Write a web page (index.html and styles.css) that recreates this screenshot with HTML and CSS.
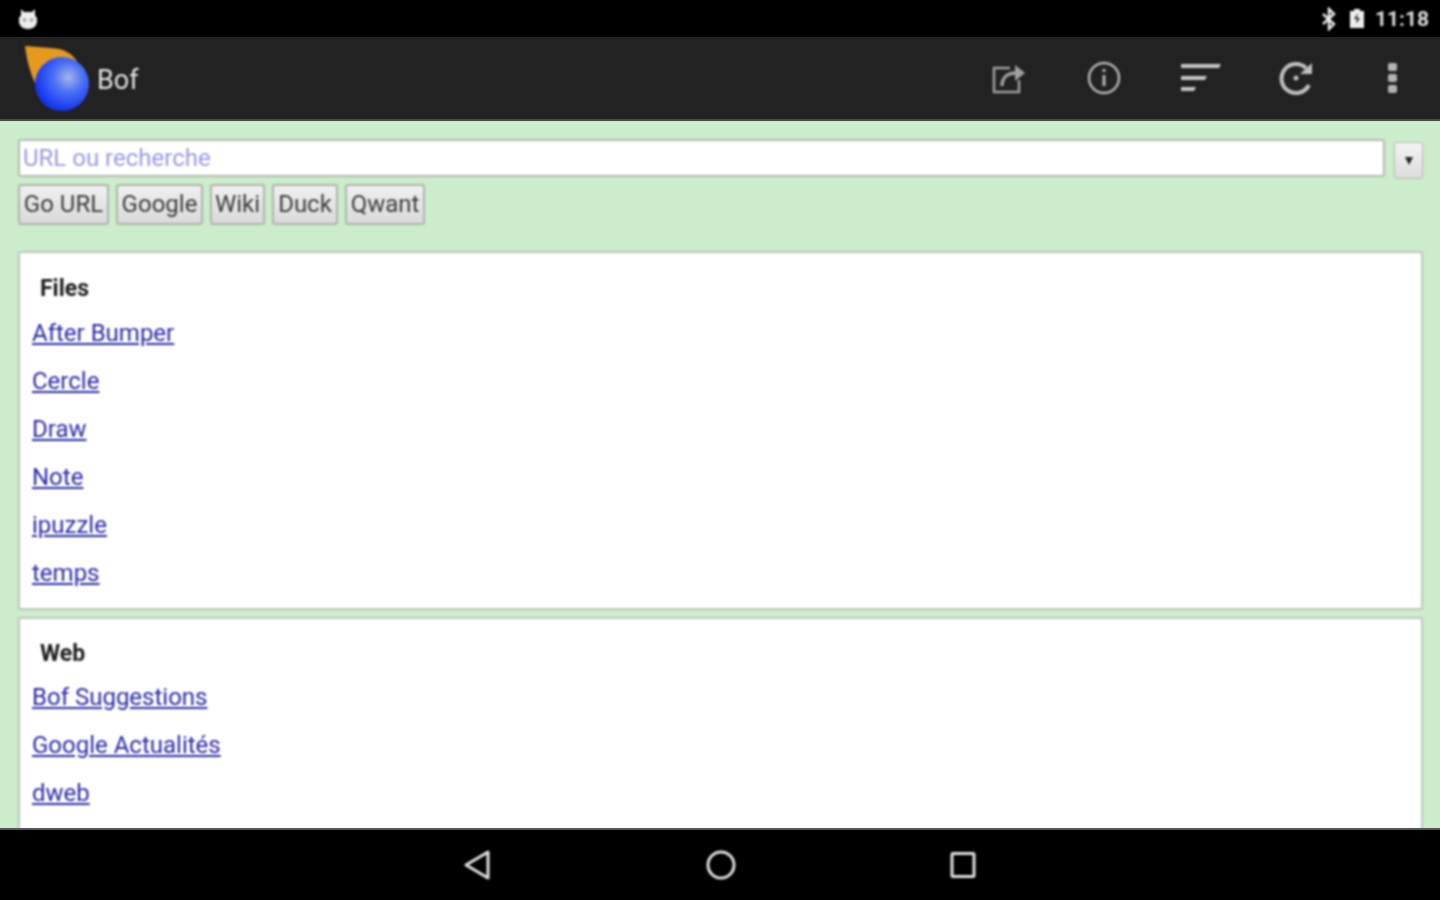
FILE: index.html
```
<!DOCTYPE html>
<html lang="fr">
<head>
<meta charset="utf-8">
<title>Bof</title>
<link rel="stylesheet" href="styles.css">
</head>
<body>
<div class="screen">
  <header class="status">
    <svg class="cat" width="24" height="24" viewBox="0 0 24 24"><path d="M5 2l3 3h8l3-3v7c2 0 2 3 2 5 0 5-4 8-9 8s-9-3-9-8c0-2 0-5 2-5z" fill="#eee"/><circle cx="8.500" cy="13" r="2" fill="#aaa"/><circle cx="15.500" cy="13" r="2" fill="#aaa"/></svg>
    <div class="status-right">
      <svg class="bt" width="16" height="24" viewBox="0 0 16 24"><path d="M2 7l11 10-5 5V2l5 5L2 17" fill="none" stroke="#eee" stroke-width="2.400"/></svg>
      <svg width="16" height="19" viewBox="0 0 16 19"><path d="M1 2h4V0h6v2h4v17H1z" fill="#eee"/><path d="M9 4l-4 6h3l-1 5 4-6H8z" fill="#222"/></svg>
      <span class="clock">11:18</span>
    </div>
  </header>
  <div class="actionbar">
    <svg class="logo" width="68" height="72" viewBox="0 0 68 72">
      <defs><radialGradient id="ball" cx="0.62" cy="0.38" r="0.62"><stop offset="0" stop-color="#a4b6e8"/><stop offset="0.45" stop-color="#4a70f5"/><stop offset="1" stop-color="#1435f0"/></radialGradient></defs>
      <path d="M1 7l26 2c14 1 21 5 27 15L16 54C8 40 3 24 1 7z" fill="#e59a1f"/>
      <circle cx="38" cy="45" r="27" fill="url(#ball)"/>
    </svg>
    <span class="title">Bof</span>
    <nav class="actions">
      <button class="act" type="button" aria-label="Partager"><svg width="36" height="36" viewBox="0 0 36 36" fill="none" stroke="#a0a0a0" stroke-width="2.500"><path d="M19 8H3v24h25V20"/><path d="M11 26c0-8 5-13 14-13" stroke-width="3.500"/><path d="M24 5l10 8-10 8z" fill="#a0a0a0" stroke="none"/></svg></button>
      <button class="act" type="button" aria-label="Infos"><svg width="36" height="36" viewBox="0 0 36 36" fill="none" stroke="#b4b4b4" stroke-width="2.500"><circle cx="17" cy="18" r="15"/><path d="M17 15v11M17 9v3" stroke-width="3"/></svg></button>
      <button class="act" type="button" aria-label="Trier"><svg width="44" height="30" viewBox="0 0 44 30" fill="#c8c8c8"><path d="M2 1h40l-2 4H2zM2 13h26l-2 4H2zM2 24h15l-2 4H2z"/></svg></button>
      <button class="act" type="button" aria-label="Recharger"><svg width="36" height="36" viewBox="0 0 36 36" fill="none" stroke="#c0c0c0" stroke-width="4"><path d="M30 25A14.500 14.500 0 1 1 27 8"/><path d="M21 14h12V3z" fill="#c0c0c0" stroke="none"/><circle cx="17" cy="18" r="2.500" fill="#c0c0c0" stroke="none"/></svg></button>
      <button class="act" type="button" aria-label="Menu"><svg width="12" height="34" viewBox="0 0 12 34" fill="#b4b4b4"><rect x="1" y="2" width="9" height="8" rx="2"/><rect x="1" y="13" width="9" height="8" rx="2"/><rect x="1" y="24" width="9" height="8" rx="2"/></svg></button>
    </nav>
  </div>
  <main class="content">
    <div class="urlrow">
      <div class="urlinput">URL ou recherche</div>
      <button class="drop" type="button"><span class="tri"></span></button>
    </div>
    <div class="btnrow">
      <button class="btn b1" type="button">Go URL</button>
      <button class="btn b2" type="button">Google</button>
      <button class="btn b3" type="button">Wiki</button>
      <button class="btn b4" type="button">Duck</button>
      <button class="btn b5" type="button">Qwant</button>
    </div>
    <section class="card">
      <h2 class="head">Files</h2>
      <a class="lnk" href="#">After Bumper</a>
      <a class="lnk" href="#">Cercle</a>
      <a class="lnk" href="#">Draw</a>
      <a class="lnk" href="#">Note</a>
      <a class="lnk" href="#">ipuzzle</a>
      <a class="lnk" href="#">temps</a>
    </section>
    <section class="card">
      <h2 class="head">Web</h2>
      <a class="lnk" href="#">Bof Suggestions</a>
      <a class="lnk" href="#">Google Actualités</a>
      <a class="lnk" href="#">dweb</a>
    </section>
  </main>
  <footer class="navbar">
    <svg width="30" height="32" viewBox="0 0 30 32" fill="none" stroke="#e0e0e0" stroke-width="3" stroke-linejoin="round"><path d="M25 3v26L3 16z"/></svg>
    <svg width="32" height="32" viewBox="0 0 32 32" fill="none" stroke="#e0e0e0" stroke-width="3"><circle cx="16" cy="16" r="13"/></svg>
    <svg width="28" height="30" viewBox="0 0 28 30" fill="none" stroke="#e0e0e0" stroke-width="3" stroke-linejoin="round"><rect x="3" y="3.500" width="22" height="23" rx="1"/></svg>
  </footer>
</div>
</body>
</html>
```
FILE: styles.css
```
* { box-sizing: border-box; }
html, body { margin: 0; height: 100%; background: #000; overflow: hidden; }
body { font-family: Roboto, "Liberation Sans", sans-serif; }
.screen { width: 1440px; height: 900px; display: flex; flex-direction: column; overflow: hidden; }

/* the reference is a soft upscaled capture */
.status > *, .actionbar > *, .urlrow, .btnrow, .card, .navbar svg { filter: blur(0.85px); }

.status { height: 37px; flex: none; background: #000; display: flex; align-items: center; justify-content: space-between; padding: 0 11px 0 16px; }
.status-right { display: flex; align-items: center; gap: 10px; }
.clock { color: #ddd; font-size: 21px; font-weight: 700; }
.status-right svg { flex: none; }
.bt { margin-right: 2px; }

.actionbar { height: 84px; flex: none; background: #222; border-bottom: 2px solid #444c44; display: flex; align-items: center; position: relative; padding-left: 24px; }
.logo { flex: none; margin-top: -6px; }
.title { color: #e4e4e4; font-size: 27px; margin-left: 5px; margin-top: 4px; }
.actions { margin-left: auto; margin-right: -1px; display: flex; align-items: center; }
.act { width: 96px; height: 60px; padding: 0; background: none; border: 0; display: flex; align-items: center; justify-content: center; }

.content { flex: 1; min-height: 0; overflow: hidden; background: #cdeccb; padding: 18px 17px 0 18px; }
.urlrow { display: flex; align-items: flex-start; gap: 9px; }
.urlinput { flex: 1; height: 38px; background: #fff; border: 2px solid #b3bab2; border-radius: 3px; color: #9a98e4; font-size: 24px; line-height: 34px; padding-left: 3px; }
.drop { width: 29px; height: 37px; margin-top: 3px; padding: 0; background: linear-gradient(#f4f4f4, #dcdcdc); border: 1px solid #b3bab2; border-radius: 3px; display: flex; align-items: center; justify-content: center; }
.tri { width: 0; height: 0; border-left: 4.500px solid transparent; border-right: 4.500px solid transparent; border-top: 8px solid #222; }

.btnrow { display: flex; gap: 7px; margin-top: 5px; }
.btn { height: 41px; padding: 0 0 2px; background: linear-gradient(#f0f0f0, #dadada); border: 2px solid #adb4ac; border-radius: 3px; color: #3c3c3c; font: 400 24px Roboto, "Liberation Sans", sans-serif; display: block; }
.b1 { width: 91px; }
.b2 { width: 87px; }
.b3 { width: 55px; }
.b4 { width: 66px; }
.b5 { width: 80px; }

.card { background: #fff; border: 2px solid #bcc6bc; border-radius: 2px; padding: 0 12px; margin-top: 7px; height: 359px; }
.btnrow + .card { margin-top: 26px; }
.head { margin: 0 0 0 8px; padding-top: 21.500px; font-size: 23px; font-weight: 700; line-height: 27px; color: #1c1c1c; }
.lnk { display: block; width: max-content; color: #2c29aa; font-size: 24px; line-height: 28px; margin-top: 20px; }
.head + .lnk { margin-top: 17.500px; }
.card + .card .head { padding-top: 20.500px; }
.card + .card .head + .lnk { margin-top: 16.500px; }

.navbar { height: 72px; flex: none; background: #000; border-top: 2px solid #555; display: flex; align-items: center; justify-content: center; }
.navbar svg { flex: none; margin: 0 106px; }
```
